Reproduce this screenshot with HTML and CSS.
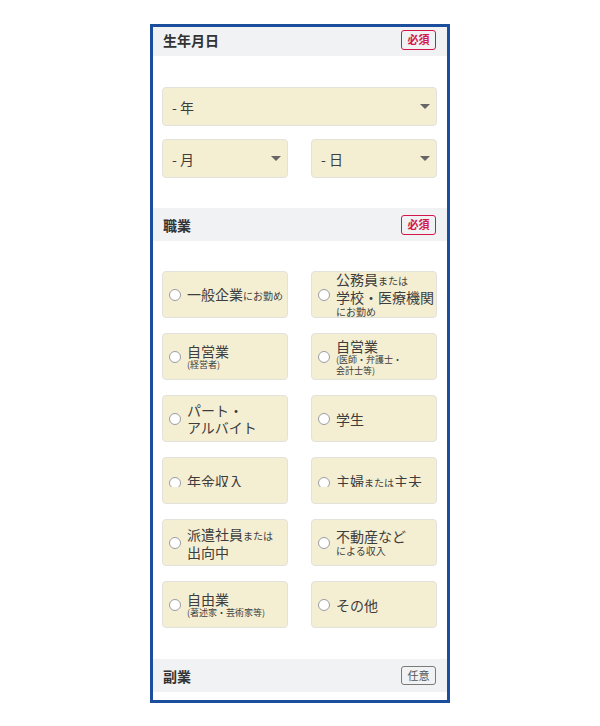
FILE: index.html
```html
<!DOCTYPE html>
<html lang="ja">
<head>
<meta charset="utf-8">
<title>form</title>
<link rel="stylesheet" href="styles.css">
</head>
<body>
<div class="frame">
  <div class="content">
    <div class="sec-head">
      <span class="sec-title">生年月日</span>
      <span class="badge req">必須</span>
    </div>
    <div class="sec-body birth">
      <div class="select"><span>- 年</span><i class="caret"></i></div>
      <div class="pair">
        <div class="select"><span>- 月</span><i class="caret"></i></div>
        <div class="select"><span>- 日</span><i class="caret"></i></div>
      </div>
    </div>

    <div class="sec-head">
      <span class="sec-title">職業</span>
      <span class="badge req">必須</span>
    </div>
    <div class="sec-body job">
      <div class="grid">
        <label class="opt"><span class="radio"></span><span class="txt"><span class="l">一般企業<small class="s10">にお勤め</small></span></span></label>
        <label class="opt"><span class="radio"></span><span class="txt"><span class="l">公務員<small class="s10">または</small></span><span class="l">学校・医療機関</span><span class="l sm10">にお勤め</span></span></label>

        <label class="opt"><span class="radio"></span><span class="txt"><span class="l">自営業</span><span class="l sm8">(経営者)</span></span></label>
        <label class="opt"><span class="radio"></span><span class="txt"><span class="l">自営業</span><span class="l sm8">(医師・弁護士・</span><span class="l sm8">会計士等)</span></span></label>

        <label class="opt"><span class="radio"></span><span class="txt"><span class="l l17">パート・</span><span class="l l17">アルバイト</span></span></label>
        <label class="opt"><span class="radio"></span><span class="txt"><span class="l">学生</span></span></label>

        <label class="opt"><span class="clip"><span class="radio"></span><span class="txt"><span class="l">年金収入</span></span></span></label>
        <label class="opt"><span class="clip"><span class="radio"></span><span class="txt"><span class="l">主婦<small class="s10">または</small>主夫</span></span></span></label>

        <label class="opt"><span class="radio"></span><span class="txt"><span class="l">派遣社員<small class="s10">または</small></span><span class="l">出向中</span></span></label>
        <label class="opt"><span class="radio"></span><span class="txt"><span class="l">不動産など</span><span class="l sm10">による収入</span></span></label>

        <label class="opt"><span class="radio"></span><span class="txt"><span class="l">自由業</span><span class="l sm8">(著述家・芸術家等)</span></span></label>
        <label class="opt"><span class="radio"></span><span class="txt"><span class="l">その他</span></span></label>
      </div>
    </div>

    <div class="sec-head">
      <span class="sec-title">副業</span>
      <span class="badge opt-badge">任意</span>
    </div>
  </div>
</div>
</body>
</html>
```

FILE: styles.css
```css
* { box-sizing: border-box; }
html, body { margin: 0; padding: 0; background: #fff; }
body {
  font-family: "Noto Sans CJK JP", "Noto Sans", sans-serif;
  color: #3d3d3d;
}
.frame {
  width: 300px;
  height: 679px;
  margin: 24px 0 0 150px;
  border: 3px solid #1b4f9e;
  overflow: hidden;
}
.content { margin-top: -4px; }
.sec-head {
  height: 33px;
  background: #f1f2f4;
  display: flex;
  align-items: center;
  justify-content: space-between;
  padding: 0 11px 0 10px;
}
.sec-title {
  font-size: 14px;
  font-weight: bold;
  color: #333;
  line-height: 1;
}
.badge {
  width: 35px;
  height: 20px;
  border-radius: 3px;
  border: 1px solid;
  display: inline-flex;
  align-items: center;
  justify-content: center;
  font-size: 11px;
  line-height: 1;
}
.badge.req { color: #d3174b; border-color: #d3174b; font-weight: bold; }
.badge.opt-badge { color: #555; border-color: #7a7a7a; height: 19px; }

.sec-body { padding: 0 10px 0 9px; }
.birth { padding-top: 31px; padding-bottom: 30px; display: flex; flex-direction: column; gap: 13px; }
.pair { display: grid; grid-template-columns: 1fr 1fr; column-gap: 23px; }
.select {
  height: 39px;
  background: #f4efd3;
  border: 1px solid #e2e1dc;
  border-radius: 4px;
  display: flex;
  align-items: center;
  justify-content: space-between;
  padding: 0 6px 0 9px;
  font-size: 14px;
  color: #3d3d3d;
}
.caret {
  width: 0; height: 0;
  border-left: 5px solid transparent;
  border-right: 5px solid transparent;
  border-top: 5px solid #666;
}
.job { padding-top: 30px; padding-bottom: 31px; }
.grid {
  display: grid;
  grid-template-columns: 1fr 1fr;
  column-gap: 23px;
  row-gap: 15px;
  grid-auto-rows: 47px;
}
.opt {
  background: #f4efd3;
  border: 1px solid #e2e1dc;
  border-radius: 4px;
  display: flex;
  align-items: center;
  padding: 0 4px 0 6px;
  overflow: hidden;
}
.radio {
  flex: none;
  width: 12px; height: 12px;
  border-radius: 50%;
  border: 1px solid #9c9ca4;
  background: #fff;
  margin-right: 6px;
}
.txt { display: flex; flex-direction: column; font-size: 14px; color: #3d3d3d; }
.l { line-height: 16px; white-space: nowrap; }
.l17 { line-height: 17px; }
.s10 { font-size: 10px; }
.sm10 { font-size: 10px; line-height: 13px; }
.sm8 { font-size: 9px; line-height: 11px; }
.clip {
  display: flex;
  align-items: flex-start;
  height: 13px;
  overflow: hidden;
}
.clip .radio { margin-top: 3px; }
.clip .l { line-height: 15px; }
```
